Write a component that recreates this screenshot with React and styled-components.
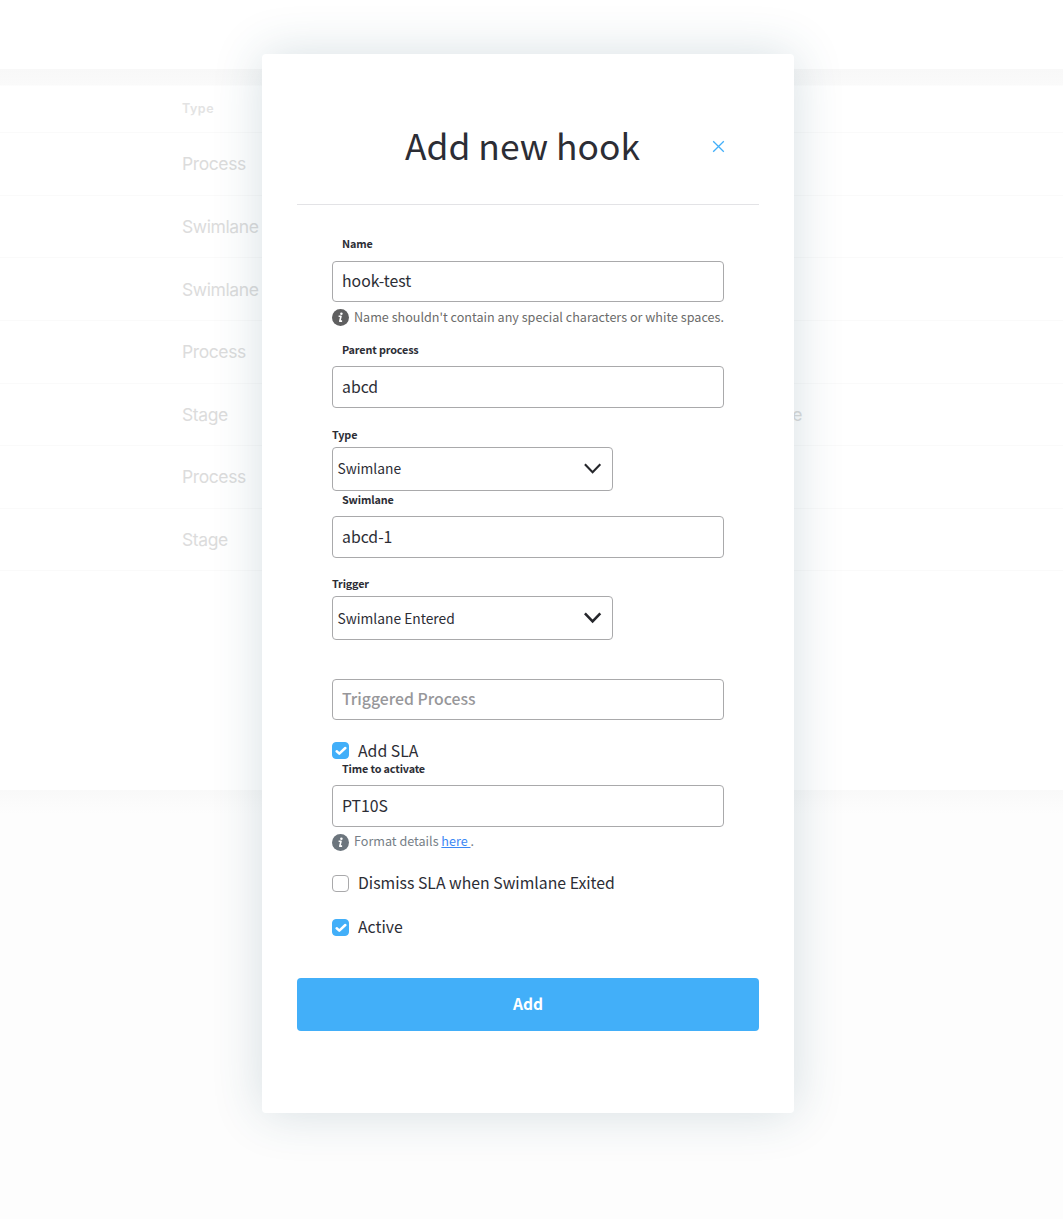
import React from "react";
import styled, { createGlobalStyle } from "styled-components";

const Global = createGlobalStyle`
  *, *::before, *::after { box-sizing: border-box; }
  body { margin: 0; background: #fdfdfd; }
`;

const Page = styled.div`
  position: relative;
  height: 1219px;
  overflow: hidden;
  background: #fdfdfd;
  font-family: "Noto Sans CJK SC", "Noto Sans", sans-serif;
  color: #2c2d35;
`;

const TopBar = styled.div`
  height: 69px;
  background: #fff;
`;

const Content = styled.div`
  height: 721px;
  padding-top: 17px;
  background: linear-gradient(#f8f8f8, #fafafa 16px, #fff 17px);
  font-family: Inter, Roboto, sans-serif;
`;

const Band = styled.div`
  height: 429px;
  background: linear-gradient(#f9f9f9, #fdfdfd 24px);
`;

const TableRow = styled.div`
  display: grid;
  grid-template-columns: 182px 540px 1fr;
  align-items: center;
  height: ${(p) => (p.$head ? 47 : 62.64)}px;
  padding-bottom: ${(p) => (p.$head ? 1 : 0)}px;
  border-bottom: 1px solid #fafafa;
  font-size: ${(p) => (p.$head ? 12.5 : 17.5)}px;
  font-weight: ${(p) => (p.$head ? 600 : 400)};
  letter-spacing: ${(p) => (p.$head ? 0.5 : -0.4)}px;
  color: ${(p) => (p.$head ? "#e3e3e3" : "#dcdcdc")};
`;

const Cell = styled.span`
  text-align: ${(p) => (p.$end ? "right" : "left")};
  width: ${(p) => (p.$end ? "80px" : "auto")};
`;

const Modal = styled.section`
  position: absolute;
  left: 262px;
  top: 54px;
  width: 532px;
  height: 1059px;
  padding: 0 35px;
  border-radius: 4px;
  background: #fff;
  box-shadow: 0 0 50px rgba(38, 84, 104, 0.19);
`;

const Header = styled.header`
  display: flex;
  align-items: center;
  height: 151px;
  padding: 35px 34px 0 108px;
  border-bottom: 1px solid #e3e3e6;
`;

const Title = styled.h1`
  flex: 1;
  margin: -3px 0 0;
  font-size: 35.4px;
  font-weight: 400;
  line-height: 48px;
  white-space: nowrap;
`;

const CloseButton = styled.button`
  display: flex;
  padding: 0;
  border: 0;
  background: none;
  color: #42aff9;
`;

const Form = styled.form`
  display: flex;
  flex-direction: column;
  align-items: flex-start;
  padding: 31px 35px 0;
`;

const Label = styled.label`
  height: 16px;
  margin: ${(p) => p.$top || 0}px 0 ${(p) => p.$gap ?? 8}px ${(p) => (p.$flush ? 0 : 10)}px;
  font-size: 10.8px;
  font-weight: 600;
  letter-spacing: -0.14px;
  line-height: 14px;
  white-space: nowrap;
`;

const TextInput = styled.input`
  width: 392px;
  height: ${(p) => p.$h || 42}px;
  margin: ${(p) => p.$top || 0}px 0 0;
  padding: 0 9px ${(p) => (p.$h ? 3 : 1)}px;
  border: 1px solid #a9a9ab;
  border-radius: 4px;
  outline: none;
  background: #fff;
  color: inherit;
  font: 400 15.8px/24px "Noto Sans CJK SC", sans-serif;
  &::placeholder {
    color: #97979a;
    font-weight: 500;
    opacity: 1;
  }
`;

const SelectBox = styled.div`
  display: flex;
  align-items: center;
  justify-content: space-between;
  width: 281px;
  height: 44px;
  padding: 0 10px 0 4.5px;
  border: 1px solid #a9a9ab;
  border-radius: 4px;
  font-size: 13.8px;
  line-height: 20px;
`;

const SelectValue = styled.span`
  padding-bottom: ${(p) => p.$lift || 0}px;
`;

const Help = styled.div`
  display: flex;
  align-items: center;
  gap: 5px;
  height: 18px;
  margin-top: ${(p) => p.$top}px;
  color: ${(p) => p.$color};
  font-size: 12.6px;
  line-height: 18px;
  white-space: pre;
`;

const HelpText = styled.span`
  margin-top: ${(p) => (p.$lift ? -3 : -1)}px;
  opacity: 0.93;
`;

const HelpLink = styled.a`
  color: #2f80f5;
  text-decoration: underline;
`;

const CheckRow = styled.label`
  display: flex;
  align-items: center;
  gap: 9px;
  height: 17px;
  margin-top: ${(p) => p.$top}px;
  font-size: 15.8px;
  line-height: 17px;
  white-space: nowrap;
`;

const CheckText = styled.span`
  margin-top: ${(p) => (p.$lift ? -3 : -1)}px;
`;

const Box = styled.span`
  display: flex;
  align-items: center;
  justify-content: center;
  width: 17px;
  height: 17px;
  border: 1px solid ${(p) => (p.$on ? "#42aff9" : "#a9a9ab")};
  border-radius: 4px;
  background: ${(p) => (p.$on ? "#42aff9" : "#fff")};
`;

const Submit = styled.button`
  display: block;
  width: 462px;
  height: 53px;
  margin: 42px 0 0;
  padding: 0 0 3px;
  border: 0;
  border-radius: 4px;
  background: #42aff9;
  color: #fff;
  font: 600 15.6px/24px "Noto Sans CJK SC", sans-serif;
`;

const rows = [
  ["Process"],
  ["Swimlane"],
  ["Swimlane"],
  ["Process"],
  ["Stage", "e"],
  ["Process"],
  ["Stage"],
];

const Chevron = ({ weight }) => (
  <svg width="18" height="12" viewBox="0 0 18 12" fill="none" stroke="#25262b" strokeWidth={weight}>
    <path d="M0.9 1.3 8.6 9.3 16.3 1.3" />
  </svg>
);

const Info = () => (
  <svg width="17" height="17" viewBox="0 0 17 17">
    <circle cx="8.5" cy="8.5" r="8.5" fill="currentColor" />
    <circle cx="9.4" cy="4.8" r="1.25" fill="#fff" />
    <path d="M6.6 7.3H9L7.8 12.1H10.1" fill="none" stroke="#fff" strokeWidth="1.6" strokeLinejoin="round" />
  </svg>
);

const Check = ({ label, on, top, lift }) => (
  <CheckRow $top={top}>
    <Box $on={on}>
      {on && (
        <svg width="12" height="10" viewBox="0 0 12 10" fill="none" stroke="#fff" strokeWidth="2.5" strokeLinecap="round" strokeLinejoin="round">
          <path d="M1.7 5.3 4.3 7.6 10.3 2" />
        </svg>
      )}
    </Box>
    <CheckText $lift={lift}>{label}</CheckText>
  </CheckRow>
);

export default function App() {
  return (
    <Page>
      <Global />
      <TopBar />
      <Content>
        <TableRow $head>
          <span />
          <Cell>Type</Cell>
        </TableRow>
        {rows.map(([type, extra], i) => (
          <TableRow key={i}>
            <span />
            <Cell>{type}</Cell>
            {extra && <Cell $end>{extra}</Cell>}
          </TableRow>
        ))}
      </Content>
      <Band />
      <Modal>
        <Header>
          <Title>Add new hook</Title>
          <CloseButton type="button" aria-label="Close">
            <svg width="13" height="13" viewBox="0 0 13 13" stroke="currentColor" strokeWidth="1.3">
              <path d="M1.2 1.2 11.8 11.8M11.8 1.2 1.2 11.8" />
            </svg>
          </CloseButton>
        </Header>
        <Form>
          <Label $gap={9}>Name</Label>
          <TextInput $h={41} defaultValue="hook-test" />
          <Help $top={6} $color="#5f5f60">
            <Info />
            <HelpText>Name shouldn't contain any special characters or white spaces.</HelpText>
          </Help>
          <Label $top={16}>Parent process</Label>
          <TextInput defaultValue="abcd" />
          <Label $top={19} $gap={4} $flush>Type</Label>
          <SelectBox>
            <SelectValue $lift={2}>Swimlane</SelectValue>
            <Chevron weight={2.1} />
          </SelectBox>
          <Label $top={1}>Swimlane</Label>
          <TextInput defaultValue="abcd-1" />
          <Label $top={18} $gap={4} $flush>Trigger</Label>
          <SelectBox>
            <SelectValue>Swimlane Entered</SelectValue>
            <Chevron weight={2.6} />
          </SelectBox>
          <TextInput $h={41} $top={39} placeholder="Triggered Process" />
          <Check top={22} on label="Add SLA" />
          <Label $top={2}>Time to activate</Label>
          <TextInput defaultValue="PT10S" />
          <Help $top={6} $color="#6c757d">
            <Info />
            <HelpText $lift>Format details <HelpLink>here </HelpLink>.</HelpText>
          </Help>
          <Check top={24} lift label="Dismiss SLA when Swimlane Exited" />
          <Check top={27} lift on label="Active" />
        </Form>
        <Submit type="button">Add</Submit>
      </Modal>
    </Page>
  );
}
